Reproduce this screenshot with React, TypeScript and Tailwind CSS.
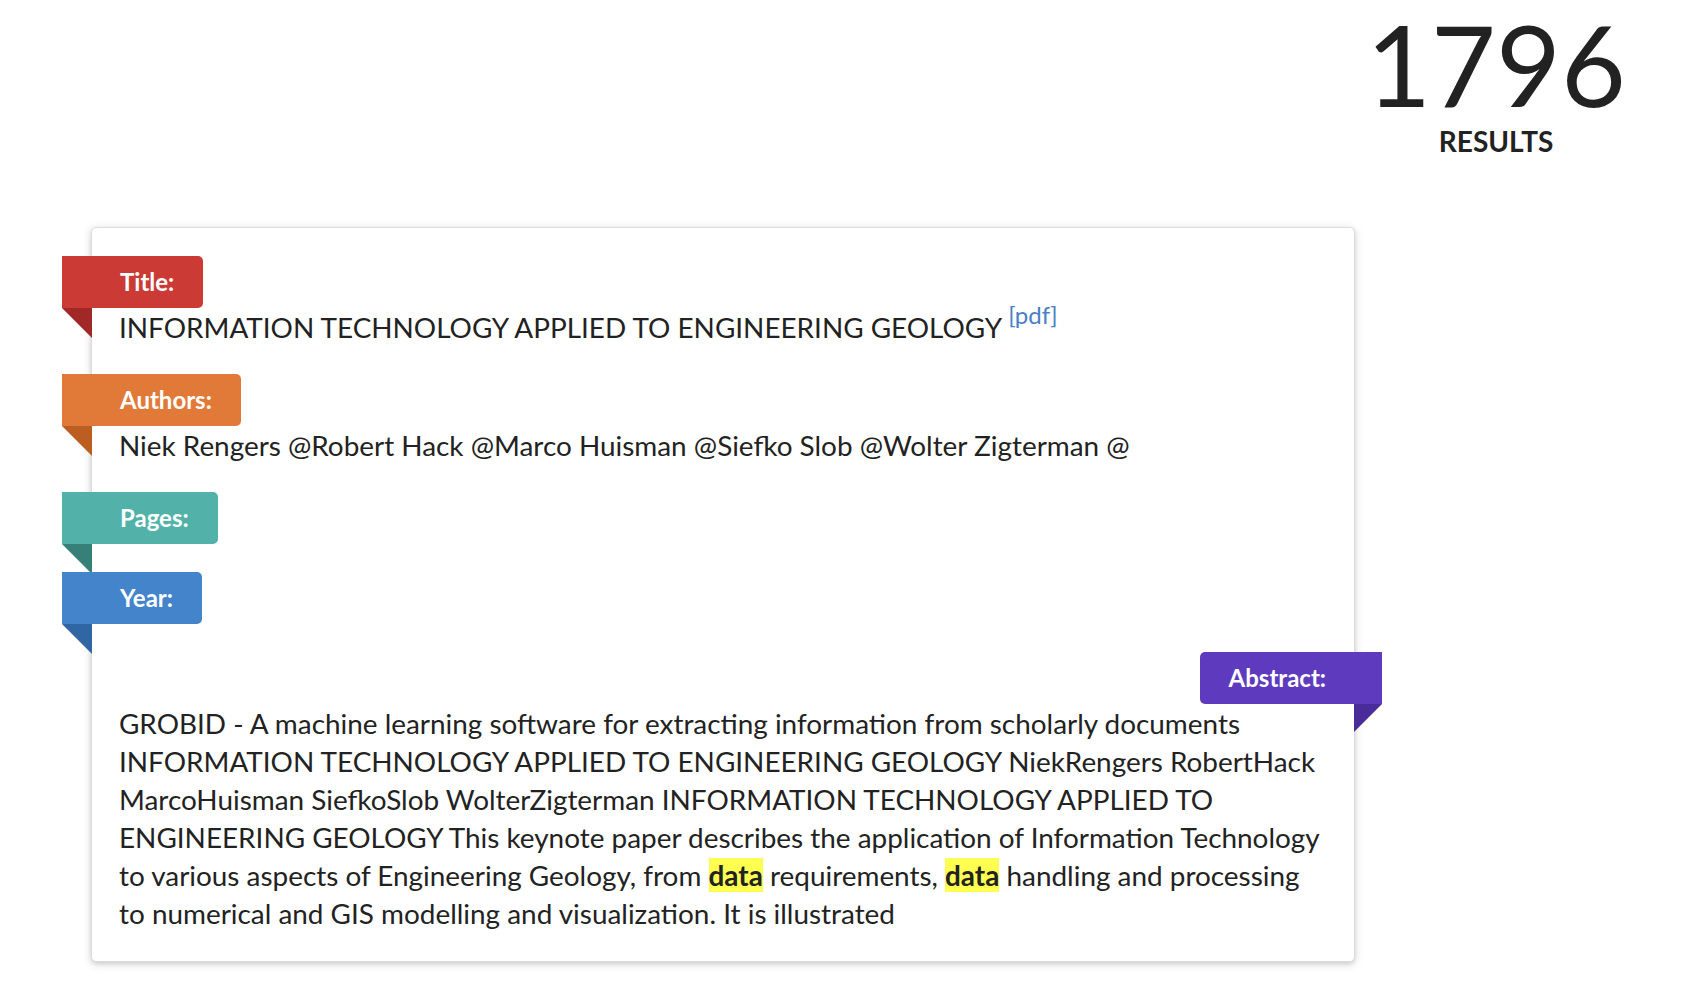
import type { ReactNode } from 'react';

function Ribbon({ label, bg, fold }: { label: string; bg: string; fold: string }) {
  return (
    <div className={`relative -ml-[57px] flex h-[52px] w-fit items-center rounded-r-[5px] pl-[58px] pr-[29px] text-[24px] font-bold text-white ${bg}`}>
      {label}
      {/* pliegue */}
      <span className={`absolute left-0 top-full h-0 w-0 border-l-[30px] border-t-[30px] border-l-transparent ${fold}`} />
    </div>
  );
}

function Section({ children, mb = true }: { children: ReactNode; mb?: boolean }) {
  return <div className={mb ? 'mb-[28px]' : ''}>{children}</div>;
}

function Hl({ children }: { children: ReactNode }) {
  return <span className="bg-[#ffff52] font-bold">{children}</span>;
}

export default function App() {
  return (
    <main className="min-h-screen w-full bg-white pb-10 pt-[8px] font-[Lato,sans-serif] text-[#222]">
      {/* Estadística */}
      <div className="flex justify-end pr-[64px]">
        <div className="flex flex-col items-center">
          <span className="text-[112px] leading-none font-normal">1796</span>
          <span className="mt-[7px] text-[28px] leading-none font-bold uppercase">Results</span>
        </div>
      </div>

      {/* Resultado */}
      <article className="ml-[91px] mt-[72px] w-[1264px] rounded-[5px] border border-[#dcdcdc] bg-white px-[27px] pb-[29px] pt-[28px] text-[27.9px] leading-[38px] shadow-[0_2px_4px_0_rgba(34,36,38,0.12),0_2px_10px_0_rgba(34,36,38,0.15)]">
        <Section>
          <Ribbon label="Title:" bg="bg-[#cb3a34]" fold="border-t-[#a02826]" />
          <p>
            INFORMATION TECHNOLOGY APPLIED TO ENGINEERING GEOLOGY{' '}
            <sup className="-top-[14px] text-[24px] text-[#4a80c6]">[pdf]</sup>
          </p>
        </Section>

        <Section>
          <Ribbon label="Authors:" bg="bg-[#e17a38]" fold="border-t-[#bc5e22]" />
          <p>Niek Rengers @Robert Hack @Marco Huisman @Siefko Slob @Wolter Zigterman @</p>
        </Section>

        <Section>
          <Ribbon label="Pages:" bg="bg-[#52b2aa]" fold="border-t-[#378078]" />
        </Section>

        <Section>
          <Ribbon label="Year:" bg="bg-[#4384cb]" fold="border-t-[#2f66a3]" />
        </Section>

        <Section mb={false}>
          <div className="flex justify-end">
            <div className="relative -mr-[55px] flex h-[52px] items-center rounded-l-[5px] bg-[#5e3bbe] pl-[29px] pr-[56px] text-[24px] font-bold text-white">
              Abstract:
              <span className="absolute right-0 top-full h-0 w-0 border-r-[28px] border-t-[28px] border-r-transparent border-t-[#4a2b9a]" />
            </div>
          </div>
          <p>
            GROBID - A machine learning software for extracting information from scholarly documents
            INFORMATION TECHNOLOGY APPLIED TO ENGINEERING GEOLOGY NiekRengers RobertHack MarcoHuisman
            SiefkoSlob WolterZigterman INFORMATION TECHNOLOGY APPLIED TO ENGINEERING GEOLOGY This keynote
            paper describes the application of Information Technology to various aspects of Engineering
            Geology, from <Hl>data</Hl> requirements, <Hl>data</Hl> handling and processing to numerical and
            GIS modelling and visualization. It is illustrated
          </p>
        </Section>
      </article>
    </main>
  );
}
